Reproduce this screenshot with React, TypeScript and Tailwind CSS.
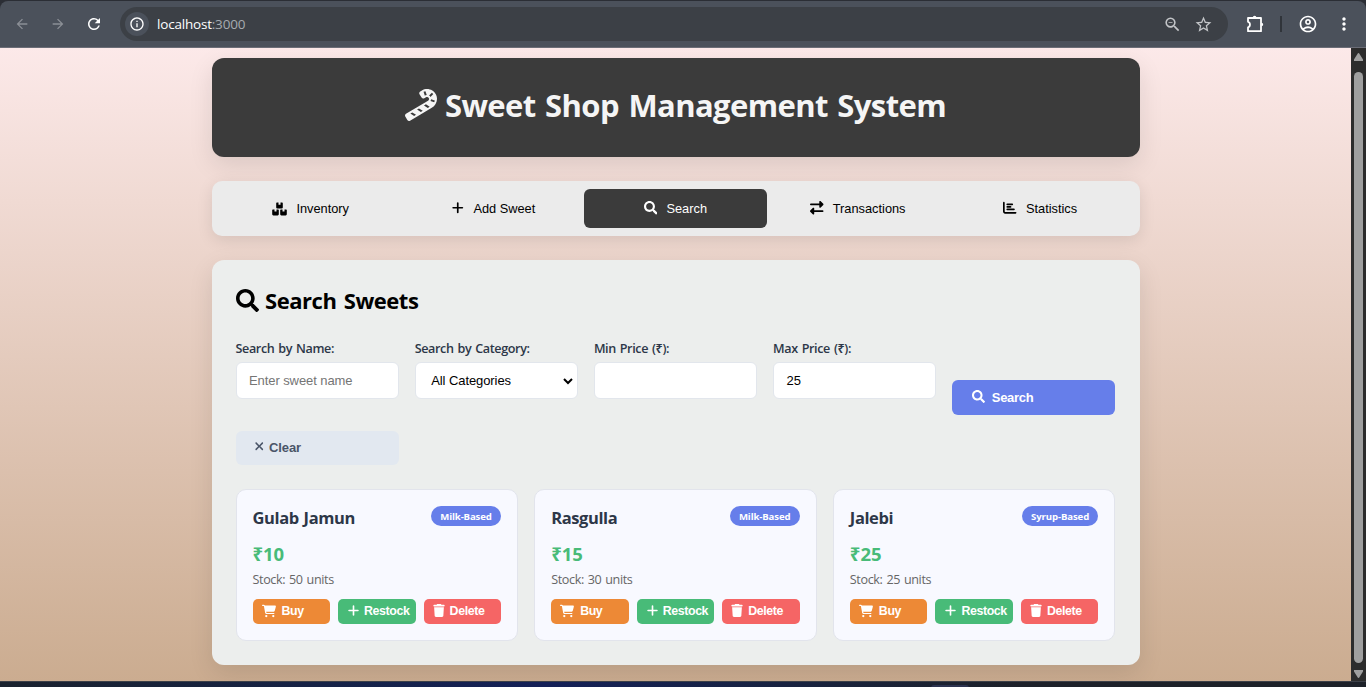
import React from "react";
import { FaCandyCane, FaSearch } from "react-icons/fa";
import { FaPlus, FaRightLeft, FaChartBar, FaCartShopping, FaTrash, FaXmark } from "react-icons/fa6";
import {
  MdArrowBack, MdArrowForward, MdRefresh, MdOutlineInfo, MdZoomOut, MdStarBorder,
  MdOutlineAccountCircle, MdMoreVert,
} from "react-icons/md";

const UI = "font-['Open_Sans','Noto_Sans',sans-serif]";
const ARIAL = "font-['Liberation_Sans',Arial,sans-serif]";

function PuzzleIcon({ className }: { className?: string }) {
  return (
    <svg className={className} viewBox="0 0 20 20" fill="none" stroke="currentColor" strokeWidth="1.8" strokeLinejoin="round">
      <path d="M3 4h13v13.2H3V13.4c2.6-.4 2.6-5.2 0-5.6Z" />
      <path d="M7.8 3.6a1.8 1.8 0 0 1 3.6 0ZM16.4 8.7a1.8 1.8 0 0 1 0 3.6Z" fill="currentColor" stroke="none" />
    </svg>
  );
}

function BoxesIcon({ className }: { className?: string }) {
  const box = "h1.6v2.2h2v-2.2h1.6a.7.7 0 0 1 .7.7v4.2a1.1 1.1 0 0 1-1.1 1.1h-4.4a1.1 1.1 0 0 1-1.1-1.1v-4.2a.7.7 0 0 1 .7-.7Z";
  return (
    <svg className={className} viewBox="0 0 15 14" fill="currentColor">
      <path d={"M4.9 .6" + box} />
      <path d={"M.9 7.4" + box} />
      <path d={"M8.9 7.4" + box} />
    </svg>
  );
}

function BrowserBar() {
  return (
    <div className="h-[48px] shrink-0 bg-[#2b2e35]">
      <div className="mt-px flex h-[47px] items-center rounded-t-[8px] border-b border-[#6b6d77] bg-[#4b515b] text-white">
        <MdArrowBack className="ml-[14px] size-4 text-[#8b8f96]" />
        <MdArrowForward className="ml-[20px] size-4 text-[#8b8f96]" />
        <MdRefresh className="ml-[19px] size-[18px]" />
        <div className="ml-[17px] flex h-[34px] w-[1108px] items-center rounded-full bg-[#3c4046]">
          <div className="ml-[5px] flex size-6 items-center justify-center rounded-full bg-[#4b515b]">
            <MdOutlineInfo className="size-4" />
          </div>
          <span className={`ml-2 text-[13.5px] tracking-[-0.2px] ${UI}`}>
            localhost<span className="text-[#a6abb1]">:3000</span>
          </span>
          <MdZoomOut className="ml-auto size-[19px] text-[#c3c5c8]" />
          <MdStarBorder className="ml-[12px] mr-[15px] size-[19px] text-[#c3c5c8]" />
        </div>
        <PuzzleIcon className="ml-[17px] size-[20px]" />
        <div className="ml-[15px] h-4 w-[2px] bg-[#30343a]" />
        <MdOutlineAccountCircle className="ml-[16px] size-[20px]" />
        <MdMoreVert className="ml-[16px] size-[20px]" />
      </div>
    </div>
  );
}

const tabs = [
  { label: "Inventory", Icon: BoxesIcon },
  { label: "Add Sweet", Icon: FaPlus },
  { label: "Search", Icon: FaSearch, active: true },
  { label: "Transactions", Icon: FaRightLeft },
  { label: "Statistics", Icon: FaChartBar },
];

const sweets = [
  { name: "Gulab Jamun", tag: "Milk-Based", price: 10, stock: 50 },
  { name: "Rasgulla", tag: "Milk-Based", price: 15, stock: 30 },
  { name: "Jalebi", tag: "Syrup-Based", price: 25, stock: 25 },
];

function Field({ label, children }: { label: string; children?: React.ReactNode }) {
  return (
    <div className="pb-4">
      <div className={`mb-[4px] h-[18px] whitespace-nowrap text-[12.6px] font-semibold leading-[18px] tracking-[-0.38px] [word-spacing:1px] text-[#2d3748] ${UI}`}>{label}</div>
      <div className="flex h-[37px] items-center rounded-[6px] border border-[#e2e6ec] bg-white px-[12.5px] text-[13px] tracking-[-0.08px]">{children}</div>
    </div>
  );
}

function SweetCard({ name, tag, price, stock }: (typeof sweets)[number]) {
  return (
    <div className="h-[152px] rounded-[10px] border border-[#e2e4ec] bg-[#f8f9ff] px-4 pt-4">
      <div className={`flex items-start justify-between ${UI}`}>
        <h3 className="text-[16.5px] font-bold leading-6 tracking-[-0.4px] [word-spacing:1px] text-[#2d3748]">{name}</h3>
        <span className="h-5 rounded-full bg-[#667eea] px-[9.4px] text-[9.6px] font-bold leading-[21px] tracking-[-0.12px] text-white">{tag}</span>
      </div>
      <div className={`mt-[11px] text-[18.5px] font-bold leading-[26px] tracking-[-0.05px] text-[#48bb78] ${UI}`}>₹{price}</div>
      <div className={`mt-[4px] text-[12.6px] leading-[18px] tracking-[-0.38px] [word-spacing:1px] text-[#666] ${UI}`}>Stock: {stock} units</div>
      <div className={`mt-[10px] grid grid-cols-3 gap-2 whitespace-nowrap text-[12.4px] font-bold tracking-[-0.4px] text-white ${ARIAL}`}>
        <button className="flex h-[25px] items-center rounded-[5px] bg-[#ed8936] pb-px pl-[9px]"><FaCartShopping className="mb-px mr-[6px] size-[14px]" />Buy</button>
        <button className="flex h-[25px] items-center rounded-[5px] bg-[#48bb78] pb-px pl-[9px]"><FaPlus className="mb-px mr-[4px] size-[13px]" />Restock</button>
        <button className="flex h-[25px] items-center rounded-[5px] bg-[#f56565] pb-px pl-[9px]"><FaTrash className="mb-px mr-[5px] h-[13px] w-[12px]" />Delete</button>
      </div>
    </div>
  );
}

export default function App() {
  return (
    <div className={`flex h-[687px] w-[1366px] flex-col overflow-hidden ${ARIAL}`}>
      <BrowserBar />
      <div className="flex min-h-0 flex-1">
        <main className="flex flex-1 flex-col overflow-hidden bg-linear-to-b from-[#fce9e9] to-[#cbac90] pl-[211.5px] pt-[10px]">
          <header className="flex h-[99px] w-[928px] shrink-0 items-center justify-center rounded-[12px] bg-[#3b3b3b] pb-[3px] text-[#f5f5f5] shadow-[0_8px_24px_rgba(0,0,0,0.1)]">
            <FaCandyCane className="mb-[2px] mr-[8px] size-8" />
            <h1 className={`pb-[2px] text-[31px] font-bold leading-none tracking-[-0.6px] [word-spacing:2px] ${UI}`}>Sweet Shop Management System</h1>
          </header>
          <nav className="mt-6 grid h-[55px] w-[928px] shrink-0 grid-cols-5 rounded-[10px] bg-[#ebebeb] p-2 text-[12.8px] text-black shadow-[0_4px_16px_rgba(0,0,0,0.1)]">
            {tabs.map(({ label, Icon, active }) => (
              <button key={label} className={active ? "flex items-center justify-center gap-[9px] rounded-[6px] bg-[#3b3b3b] text-white" : "flex items-center justify-center gap-[9px]"}>
                <Icon className={label === "Inventory" ? "h-[14px] w-[15px]" : "mb-px size-[13.5px]"} />{label}
              </button>
            ))}
          </nav>
          <section className="mt-6 h-[405px] w-[928px] shrink-0 rounded-[12px] bg-[#eceeed] px-6 pt-6 shadow-[0_8px_24px_rgba(0,0,0,0.1)]">
            <h2 className={`flex h-8 items-center text-[22px] font-bold tracking-[-0.45px] [word-spacing:2px] text-black ${UI}`}>
              <FaSearch className="mr-[6.5px] size-[23px]" />
              <span>Search Sweets</span>
            </h2>
            <div className="mt-[24px] grid grid-cols-5 items-end gap-x-4">
              <Field label="Search by Name:"><span className="text-[#757575]">Enter sweet name</span></Field>
              <Field label="Search by Category:">
                <span className="ml-[3px]">All Categories</span>
                <svg className="-mr-[10px] ml-auto" width="12" height="12" viewBox="0 0 12 12" fill="none" stroke="black" strokeWidth="2"><path d="M2 4l4 4 4-4" /></svg>
              </Field>
              <Field label="Min Price (₹):" />
              <Field label="Max Price (₹):">25</Field>
              <button className="flex h-[35px] items-center rounded-[6px] bg-[#667eea] pl-[19.5px] text-[13px] font-bold tracking-[-0.3px] text-white"><FaSearch className="mb-[2px] mr-[7px] size-[13px]" />Search</button>
              <button className="mt-4 flex h-[34px] items-center rounded-[6px] bg-[#e2e8f0] pl-[17px] text-[13px] font-bold tracking-[-0.1px] text-[#4a5568]"><FaXmark className="mb-[3px] mr-[4px] size-[12.5px]" />Clear</button>
            </div>
            <div className="mt-6 grid grid-cols-3 gap-4">
              {sweets.map((s) => <SweetCard key={s.name} {...s} />)}
            </div>
          </section>
        </main>
        <aside className="flex w-[15px] flex-col items-center bg-[#2c2c2c] text-[#9f9f9f]">
          <svg className="mt-[5px] shrink-0" width="9" height="8" viewBox="0 0 9 8" fill="currentColor"><path d="M4.5 0C5 0 5.2.4 5.4.8L9 6.5V8H0V6.5L3.6.8C3.8.4 4 0 4.5 0Z" /></svg>
          <div className="mt-[11px] w-[9px] flex-1 rounded-full bg-[#9f9f9f]" />
          <svg className="mb-[3px] mt-[7px] shrink-0" width="9" height="8" viewBox="0 0 9 8" fill="currentColor"><path d="M4.5 8C4 8 3.8 7.6 3.6 7.2L0 1.5V0H9V1.5L5.4 7.2C5.2 7.6 5 8 4.5 8Z" /></svg>
        </aside>
      </div>
      <footer className="flex h-[6px] shrink-0 border-t border-[#3c4048] bg-linear-to-r from-[#1a222e] via-[#142058] via-40% to-[#1d2129] to-75%">
        <div className="ml-[931px] mt-[3px] h-[3px] w-[38px] rounded-t bg-[#2c3350]" />
      </footer>
    </div>
  );
}
